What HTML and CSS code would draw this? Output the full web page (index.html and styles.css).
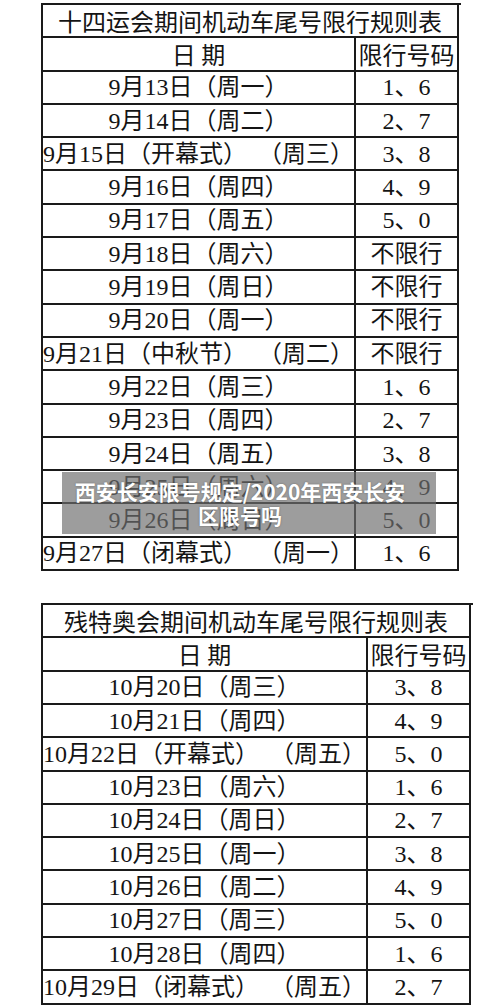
FILE: index.html
```html
<!DOCTYPE html>
<html lang="zh-CN">
<head>
<meta charset="utf-8">
<title>十四运会期间机动车尾号限行规则表</title>
<link rel="stylesheet" href="styles.css">
</head>
<body>
<div class="page">
  <div class="tbl tbl-a">
    <div class="cell title">十四运会期间机动车尾号限行规则表</div>
    <div class="cell head">日 期</div><div class="cell head">限行号码</div>
    <div class="cell">9月13日（周一）</div><div class="cell">1、6</div>
    <div class="cell">9月14日（周二）</div><div class="cell">2、7</div>
    <div class="cell">9月15日（开幕式）<span class="gap"></span>（周三）</div><div class="cell">3、8</div>
    <div class="cell">9月16日（周四）</div><div class="cell">4、9</div>
    <div class="cell">9月17日（周五）</div><div class="cell">5、0</div>
    <div class="cell">9月18日（周六）</div><div class="cell">不限行</div>
    <div class="cell">9月19日（周日）</div><div class="cell">不限行</div>
    <div class="cell">9月20日（周一）</div><div class="cell">不限行</div>
    <div class="cell">9月21日（中秋节）<span class="gap"></span>（周二）</div><div class="cell">不限行</div>
    <div class="cell">9月22日（周三）</div><div class="cell">1、6</div>
    <div class="cell">9月23日（周四）</div><div class="cell">2、7</div>
    <div class="cell">9月24日（周五）</div><div class="cell">3、8</div>
    <div class="cell">9月25日（周六）</div><div class="cell">4、9</div>
    <div class="cell">9月26日（周日）</div><div class="cell">5、0</div>
    <div class="cell">9月27日（闭幕式）<span class="gap"></span>（周一）</div><div class="cell">1、6</div>
  </div>

  <div class="tbl tbl-b">
    <div class="cell title">残特奥会期间机动车尾号限行规则表</div>
    <div class="cell head">日 期</div><div class="cell head">限行号码</div>
    <div class="cell">10月20日（周三）</div><div class="cell">3、8</div>
    <div class="cell">10月21日（周四）</div><div class="cell">4、9</div>
    <div class="cell">10月22日（开幕式）<span class="gap"></span>（周五）</div><div class="cell">5、0</div>
    <div class="cell">10月23日（周六）</div><div class="cell">1、6</div>
    <div class="cell">10月24日（周日）</div><div class="cell">2、7</div>
    <div class="cell">10月25日（周一）</div><div class="cell">3、8</div>
    <div class="cell">10月26日（周二）</div><div class="cell">4、9</div>
    <div class="cell">10月27日（周三）</div><div class="cell">5、0</div>
    <div class="cell">10月28日（周四）</div><div class="cell">1、6</div>
    <div class="cell">10月29日（闭幕式）<span class="gap"></span>（周五）</div><div class="cell">2、7</div>
  </div>

  <div class="caption">西安长安限号规定/2020年西安长安<br>区限号吗</div>
</div>
</body>
</html>
```
FILE: styles.css
```css
html, body {
  margin: 0;
  padding: 0;
  background: #ffffff;
}

.page {
  position: relative;
  width: 500px;
  height: 1008px;
  padding-top: 3px;
  box-sizing: border-box;
  overflow: hidden;
}

.tbl {
  display: grid;
  margin-left: 41px;
  border-top: 2px solid #1a1a1a;
  border-left: 2px solid #1a1a1a;
  font-family: "Liberation Serif", "Noto Sans CJK SC", serif;
  font-size: 24px;
  color: #141414;
}

.tbl-a {
  width: 418px;
  grid-template-columns: 313px 103px;
}

.tbl-b {
  width: 430px;
  margin-top: 32px;
  grid-template-columns: 325px 103px;
}

.cell {
  height: 33.3px;
  box-sizing: border-box;
  border-right: 2px solid #1a1a1a;
  border-bottom: 2px solid #1a1a1a;
  display: flex;
  align-items: center;
  justify-content: center;
  white-space: nowrap;
  line-height: 1;
}

.gap {
  display: inline-block;
  width: 18px;
}

.title {
  grid-column: 1 / span 2;
  font-family: "Noto Sans CJK SC", sans-serif;
}

.head {
  font-family: "Noto Sans CJK SC", sans-serif;
}

.caption {
  position: absolute;
  left: 62px;
  top: 472px;
  width: 374px;
  height: 62px;
  box-sizing: border-box;
  padding-right: 18px;
  background: rgba(110, 110, 110, 0.68);
  color: #ffffff;
  font-family: "Noto Sans CJK SC", sans-serif;
  font-weight: 700;
  font-size: 21px;
  line-height: 24px;
  text-align: center;
  display: flex;
  align-items: center;
  justify-content: center;
  text-shadow: 0 0 2px rgba(0, 0, 0, 0.35);
}
```
